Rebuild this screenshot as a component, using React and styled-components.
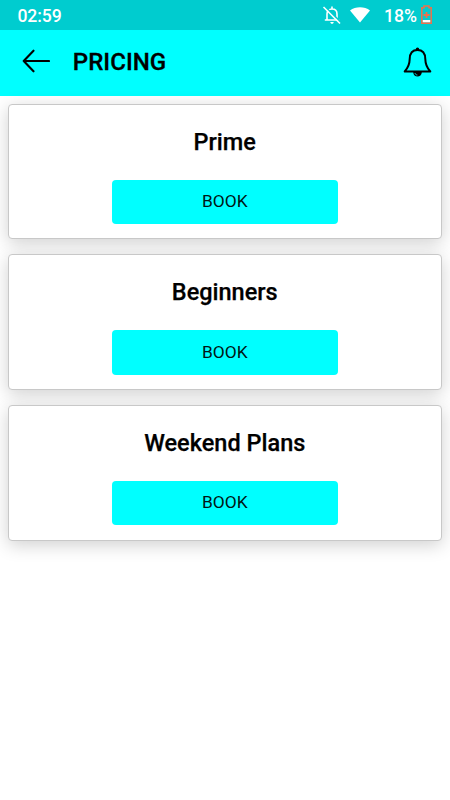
import React from "react";
import styled, { createGlobalStyle } from "styled-components";

const GlobalStyle = createGlobalStyle`
  * { box-sizing: border-box; }
  body { margin: 0; background: #fff; font-family: Roboto, "Liberation Sans", sans-serif; color: #000; }
`;

const Screen = styled.div`
  width: 450px;
  height: 800px;
  overflow: hidden;
  background: #fff;
`;

const StatusBar = styled.div`
  display: flex;
  align-items: center;
  height: 30px;
  padding: 2px 18px 0 17.4px;
  background: #00cccf;
  color: #fff;
  font-size: 17.6px;
  font-weight: 500;
  line-height: 28px;
`;

const StatusIcons = styled.div`
  display: flex;
  align-items: center;
  margin-left: auto;
`;

const Clock = styled.span`
  letter-spacing: -0.1px;
`;

const Percent = styled.span`
  margin-left: 14px;
  margin-right: 4px;
`;

const MutedIcon = styled.svg`
  width: 20px;
  height: 20px;
  margin-right: 8px;
  margin-top: -2px;
`;

const WifiIcon = styled.svg`
  width: 20px;
  height: 16px;
  margin-top: -2px;
`;

const BatteryIcon = styled.svg`
  width: 11px;
  height: 19px;
  margin-top: -3px;
`;

const Header = styled.header`
  display: flex;
  align-items: center;
  height: 66px;
  padding: 0 18px 0 22px;
  background: #00ffff;
`;

const BackIcon = styled.svg`
  width: 28px;
  height: 24px;
  margin-top: -4px;
`;

const Title = styled.h1`
  margin: -3px auto 0 22.8px;
  font-size: 24.1px;
  line-height: 30px;
  font-weight: 500;
  -webkit-text-stroke: 0.3px #000;
`;

const BellIcon = styled.svg`
  width: 29px;
  height: 30px;
  margin-top: -2px;
`;

const PlanList = styled.main`
  display: flex;
  flex-direction: column;
  gap: 15px;
  padding: 7.8px 8px 7.8px 7.5px;
`;

const PlanCard = styled.section`
  display: flex;
  flex-direction: column;
  align-items: center;
  width: 434.5px;
  height: 135.6px;
  padding-top: 20.8px;
  border: 1px solid #c8c8c8;
  border-radius: 4px;
  background: #fff;
  box-shadow: 0 4px 18px rgba(0, 0, 0, 0.19);
`;

const PlanName = styled.h2`
  margin: 0 0 22.2px;
  font-size: 23.5px;
  line-height: 32px;
  font-weight: 500;
  -webkit-text-stroke: 0.25px #000;
`;

const BookButton = styled.button`
  width: 226px;
  height: 44.5px;
  padding: 0 0 2px;
  border: 0;
  border-radius: 4px;
  background: #00ffff;
  color: #001616;
  font-family: inherit;
  font-size: 17.4px;
  line-height: 22px;
`;

const plans = ["Prime", "Beginners", "Weekend Plans"];

export default function App() {
  return (
    <Screen>
      <GlobalStyle />
      <StatusBar>
        <Clock>02:59</Clock>
        <StatusIcons>
          <MutedIcon viewBox="0 0 20 20" fill="none" stroke="#fff" strokeWidth="1.6">
            <path d="M5 15V9c0-3 2-5 5-5s5 2 5 5v6M2.8 15h14.4M10 4V1.5" />
            <path d="M8.3 17h3.4c0 1-.7 1.8-1.7 1.8S8.3 18 8.3 17z" fill="#fff" stroke="none" />
            <path d="M2.8 1.2L19 17.4" stroke="#00cccf" strokeWidth="1.5" />
            <path d="M1.5 2L18 18.5" />
          </MutedIcon>
          <WifiIcon viewBox="0 0 20 16">
            <path d="M0 3.5C5.5-.7 14.5-.7 20 3.5L10 15.5z" fill="#fff" />
          </WifiIcon>
          <Percent>18%</Percent>
          <BatteryIcon viewBox="0 0 11 19">
            <path d="M1.5 15h8v2.5h-8z" fill="#fff" />
            <path d="M3 2.7V1h5v1.7h2.2v15.5H.8V2.7z" fill="none" stroke="#ee704b" strokeWidth="1.5" />
            <path d="M5.5 7v6M2.5 10h6" stroke="#ee704b" strokeWidth="1.8" />
          </BatteryIcon>
        </StatusIcons>
      </StatusBar>
      <Header>
        <BackIcon viewBox="0 0 28 24" fill="none" stroke="#000" strokeWidth="2.1" strokeLinecap="round" strokeLinejoin="round">
          <path d="M11.5 1.7L1.7 12l9.8 10.3M1.7 12H27" />
        </BackIcon>
        <Title>PRICING</Title>
        <BellIcon viewBox="0 0 29 30" fill="none" stroke="#000" strokeWidth="2" strokeLinejoin="round">
          <path d="M14.5 3C9 3 6.8 6.8 6.7 12c-.1 6-1.6 8.8-5 12.4h25.6c-3.4-3.6-4.9-6.4-5-12.4C22.2 6.8 20 3 14.5 3z" />
          <path d="M12.7 3c0-3.3 3.6-3.3 3.6 0z" fill="#000" stroke="none" />
          <path d="M10.2 25h8.6c0 6-8.6 6-8.6 0z" fill="#000" stroke="none" />
          <path d="M12 26c.3 1.5 1.2 2 2.4 2" stroke="#00ffff" strokeWidth=".8" />
        </BellIcon>
      </Header>
      <PlanList>
        {plans.map((name) => (
          <PlanCard key={name}>
            <PlanName>{name}</PlanName>
            <BookButton type="button">BOOK</BookButton>
          </PlanCard>
        ))}
      </PlanList>
    </Screen>
  );
}
